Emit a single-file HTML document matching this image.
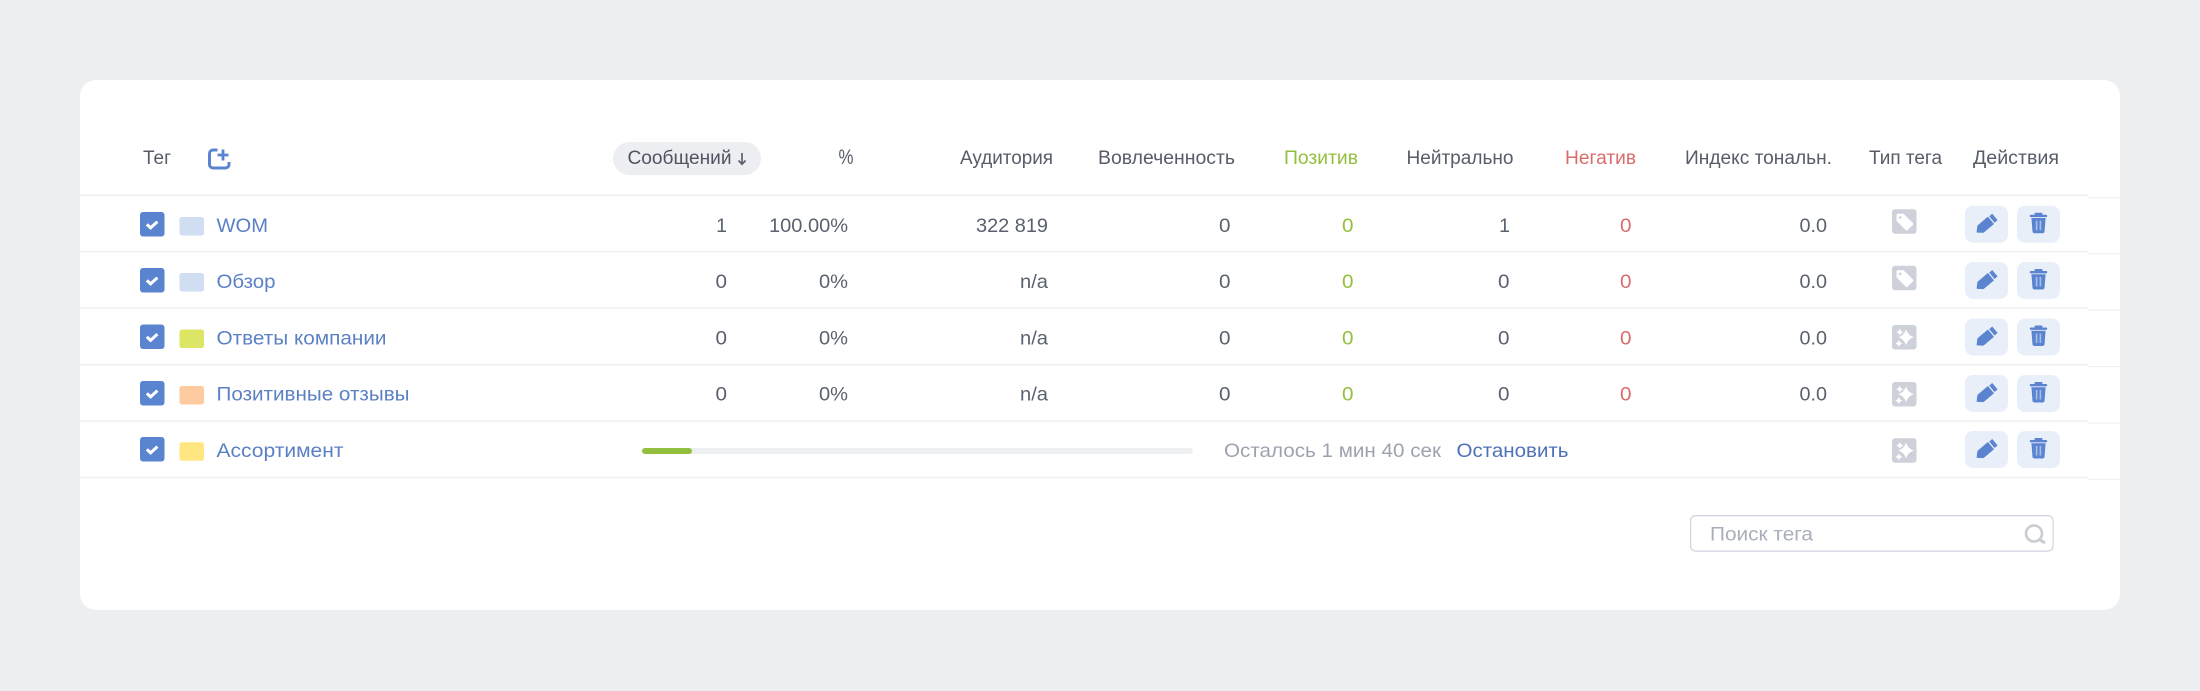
<!DOCTYPE html>
<html lang="ru">
<head>
<meta charset="utf-8">
<title>Теги</title>
<style>
html,body{margin:0;padding:0;width:2200px;height:691px;overflow:hidden;background:#edeef0}
svg{display:block}
text{font-family:"Liberation Sans","DejaVu Sans",sans-serif;font-size:19.5px;fill:#5a616e}
.h{font-size:19px;fill:#565c68}
.n{fill:#5b80c4}
.p{fill:#93bf3e}
.r{fill:#d96b6b}
</style>
</head>
<body>
<svg width="2200" height="691" viewBox="0 0 2200 691" xmlns="http://www.w3.org/2000/svg">
<defs>
  <g id="cb">
    <rect width="24.5" height="24.5" rx="3" fill="#5b84d0"/>
    <path d="M6.8 12.4 L10.6 15.8 L17.4 9.6" fill="none" stroke="#fff" stroke-width="3"/>
  </g>
  <g id="btns">
    <rect width="43" height="37" rx="8" fill="#e9eff9"/>
    <path d="M12.2 26.3 L13 20.2 L22.8 11.8 L28.2 18.2 L18.3 26.5 Z" fill="#5b84d0" stroke="#5b84d0" stroke-width="1.2" stroke-linejoin="round"/>
    <path d="M24.2 10.6 L27.2 8 L32.6 14.4 L29.6 17 Z" fill="#5b84d0"/>
    <g transform="translate(52 0)">
      <rect width="43" height="37" rx="8" fill="#e9eff9"/>
      <rect x="17.5" y="7" width="8" height="2.5" rx="1" fill="#5b84d0"/>
      <rect x="12.8" y="9" width="17.4" height="2.4" rx="1" fill="#5b84d0"/>
      <path d="M14.4 12.3 H28.6 L27.5 25.8 A2 2 0 0 1 25.7 27.5 H17.3 A2 2 0 0 1 15.5 25.8 Z" fill="#5b84d0"/>
      <rect x="18.8" y="15" width="1.6" height="9.5" fill="#a9bfe8"/>
      <rect x="22.6" y="15" width="1.6" height="9.5" fill="#a9bfe8"/>
    </g>
  </g>
  <g id="tag">
    <rect width="24.5" height="24.5" rx="3" fill="#cdd1d9"/>
    <path d="M5.5 4.5 H11.5 L21 13.8 A1.5 1.5 0 0 1 21 15.5 L15.5 21 A1.5 1.5 0 0 1 13.8 21 L4.5 11.5 V5.5 Z" fill="#fff"/>
    <circle cx="8.2" cy="8.2" r="1.3" fill="#cdd1d9"/>
  </g>
  <g id="spark">
    <rect width="24.5" height="24.5" rx="3" fill="#cdd1d9"/>
    <path d="M14 4.2 Q15.8 10.4 22 12.2 Q15.8 14 14 20.2 Q12.2 14 6.4 12.2 Q12.2 10.4 14 4.2 Z" fill="#fff"/>
    <path d="M7.8 3.4 Q8.5 6.5 11.6 7.2 Q8.5 7.9 7.8 10.8 Q7.1 7.9 4.2 7.2 Q7.1 6.5 7.8 3.4 Z" fill="#fff"/>
    <path d="M6.8 14.8 Q7.5 17.9 10.6 18.6 Q7.5 19.3 6.8 22.2 Q6.1 19.3 3.2 18.6 Q6.1 17.9 6.8 14.8 Z" fill="#fff"/>
  </g>
</defs>

<rect x="80" y="80" width="2040" height="530" rx="16" fill="#fff"/>

<!-- row lines -->
<g fill="#eef0f2">
  <rect x="80" y="194.5" width="2008" height="1.5"/>
  <rect x="80" y="251" width="2008" height="1.5"/>
  <rect x="80" y="307.3" width="2008" height="1.5"/>
  <rect x="80" y="364" width="2008" height="1.5"/>
  <rect x="80" y="420.3" width="2008" height="1.5"/>
  <rect x="80" y="476.7" width="2008" height="1.5"/>
  <rect x="2088" y="197" width="32" height="1.2"/>
  <rect x="2088" y="253" width="32" height="1.2"/>
  <rect x="2088" y="309.4" width="32" height="1.2"/>
  <rect x="2088" y="366" width="32" height="1.2"/>
  <rect x="2088" y="422.4" width="32" height="1.2"/>
  <rect x="2088" y="478.7" width="32" height="1.2"/>
</g>

<!-- header -->
<text class="h" x="143" y="164" textLength="28" lengthAdjust="spacingAndGlyphs">Тег</text>
<path d="M217.5 150 H213 A3.5 3.5 0 0 0 209.5 153.5 V164.5 A3.5 3.5 0 0 0 213 168 H225.5 A3.5 3.5 0 0 0 229 164.5 V162" fill="none" stroke="#5b84d0" stroke-width="3"/>
<path d="M223 149.5 V160.5 M217.5 155 H228.5" fill="none" stroke="#5b84d0" stroke-width="2.8"/>

<rect x="613" y="142" width="148" height="33" rx="16.5" fill="#eceef1"/>
<text class="h" x="627.5" y="164" textLength="104" lengthAdjust="spacingAndGlyphs" style="fill:#4e5460">Сообщений</text>
<path d="M742 153 V164 M738.5 160.5 L742 164.3 L745.5 160.5" fill="none" stroke="#5a616e" stroke-width="1.7"/>
<text class="h" x="838.5" y="164" textLength="15" lengthAdjust="spacingAndGlyphs" style="font-size:21px">%</text>
<text class="h" x="960" y="164" textLength="93" lengthAdjust="spacingAndGlyphs">Аудитория</text>
<text class="h" x="1098" y="164" textLength="137" lengthAdjust="spacingAndGlyphs">Вовлеченность</text>
<text class="h p" x="1284" y="164" textLength="74" lengthAdjust="spacingAndGlyphs">Позитив</text>
<text class="h" x="1406.5" y="164" textLength="107" lengthAdjust="spacingAndGlyphs">Нейтрально</text>
<text class="h r" x="1565" y="164" textLength="71" lengthAdjust="spacingAndGlyphs">Негатив</text>
<text class="h" x="1685" y="164" textLength="147" lengthAdjust="spacingAndGlyphs">Индекс тональн.</text>
<text class="h" x="1869" y="164" textLength="73" lengthAdjust="spacingAndGlyphs">Тип тега</text>
<text class="h" x="1973" y="164" textLength="86" lengthAdjust="spacingAndGlyphs">Действия</text>

<!-- checkboxes -->
<use href="#cb" x="140" y="212"/>
<use href="#cb" x="140" y="268"/>
<use href="#cb" x="140" y="324.5"/>
<use href="#cb" x="140" y="381"/>
<use href="#cb" x="140" y="437"/>

<!-- swatches -->
<rect x="179.5" y="217" width="24.5" height="18.5" rx="2.5" fill="#d0ddf3"/>
<rect x="179.5" y="273" width="24.5" height="18.5" rx="2.5" fill="#d0ddf3"/>
<rect x="179.5" y="329.5" width="24.5" height="18.5" rx="2.5" fill="#dde564"/>
<rect x="179.5" y="386" width="24.5" height="18.5" rx="2.5" fill="#fecba1"/>
<rect x="179.5" y="442.3" width="24.5" height="18.5" rx="2.5" fill="#ffe680"/>

<!-- names -->
<text class="n" x="216.5" y="232" textLength="51.5" lengthAdjust="spacingAndGlyphs">WOM</text>
<text class="n" x="216.5" y="288" textLength="59" lengthAdjust="spacingAndGlyphs">Обзор</text>
<text class="n" x="216.5" y="344.5" textLength="170" lengthAdjust="spacingAndGlyphs">Ответы компании</text>
<text class="n" x="216.5" y="400.7" textLength="193" lengthAdjust="spacingAndGlyphs">Позитивные отзывы</text>
<text class="n" x="216.5" y="457" textLength="127" lengthAdjust="spacingAndGlyphs">Ассортимент</text>

<!-- row 1 -->
<text x="727" y="232" text-anchor="end">1</text>
<text x="769" y="232" textLength="79" lengthAdjust="spacingAndGlyphs">100.00%</text>
<text x="976" y="232" textLength="72" lengthAdjust="spacingAndGlyphs">322 819</text>
<text x="1219" y="232" textLength="11.5" lengthAdjust="spacingAndGlyphs">0</text>
<text class="p" x="1342" y="232" textLength="11.5" lengthAdjust="spacingAndGlyphs">0</text>
<text x="1510" y="232" text-anchor="end">1</text>
<text class="r" x="1620" y="232" textLength="11.5" lengthAdjust="spacingAndGlyphs">0</text>
<text x="1799.5" y="232" textLength="27.5" lengthAdjust="spacingAndGlyphs">0.0</text>

<!-- row 2 -->
<text x="715.5" y="288" textLength="11.5" lengthAdjust="spacingAndGlyphs">0</text>
<text x="819" y="288" textLength="29" lengthAdjust="spacingAndGlyphs">0%</text>
<text x="1020" y="288" textLength="28" lengthAdjust="spacingAndGlyphs">n/a</text>
<text x="1219" y="288" textLength="11.5" lengthAdjust="spacingAndGlyphs">0</text>
<text class="p" x="1342" y="288" textLength="11.5" lengthAdjust="spacingAndGlyphs">0</text>
<text x="1498" y="288" textLength="11.5" lengthAdjust="spacingAndGlyphs">0</text>
<text class="r" x="1620" y="288" textLength="11.5" lengthAdjust="spacingAndGlyphs">0</text>
<text x="1799.5" y="288" textLength="27.5" lengthAdjust="spacingAndGlyphs">0.0</text>

<!-- row 3 -->
<text x="715.5" y="344.5" textLength="11.5" lengthAdjust="spacingAndGlyphs">0</text>
<text x="819" y="344.5" textLength="29" lengthAdjust="spacingAndGlyphs">0%</text>
<text x="1020" y="344.5" textLength="28" lengthAdjust="spacingAndGlyphs">n/a</text>
<text x="1219" y="344.5" textLength="11.5" lengthAdjust="spacingAndGlyphs">0</text>
<text class="p" x="1342" y="344.5" textLength="11.5" lengthAdjust="spacingAndGlyphs">0</text>
<text x="1498" y="344.5" textLength="11.5" lengthAdjust="spacingAndGlyphs">0</text>
<text class="r" x="1620" y="344.5" textLength="11.5" lengthAdjust="spacingAndGlyphs">0</text>
<text x="1799.5" y="344.5" textLength="27.5" lengthAdjust="spacingAndGlyphs">0.0</text>

<!-- row 4 -->
<text x="715.5" y="400.7" textLength="11.5" lengthAdjust="spacingAndGlyphs">0</text>
<text x="819" y="400.7" textLength="29" lengthAdjust="spacingAndGlyphs">0%</text>
<text x="1020" y="400.7" textLength="28" lengthAdjust="spacingAndGlyphs">n/a</text>
<text x="1219" y="400.7" textLength="11.5" lengthAdjust="spacingAndGlyphs">0</text>
<text class="p" x="1342" y="400.7" textLength="11.5" lengthAdjust="spacingAndGlyphs">0</text>
<text x="1498" y="400.7" textLength="11.5" lengthAdjust="spacingAndGlyphs">0</text>
<text class="r" x="1620" y="400.7" textLength="11.5" lengthAdjust="spacingAndGlyphs">0</text>
<text x="1799.5" y="400.7" textLength="27.5" lengthAdjust="spacingAndGlyphs">0.0</text>

<!-- row 5 progress -->
<rect x="642" y="448" width="551" height="6" rx="3" fill="#eeeff1"/>
<rect x="642" y="448" width="50" height="6" rx="3" fill="#93bf3e"/>
<text x="1224" y="457" textLength="217" lengthAdjust="spacingAndGlyphs" style="fill:#9da3ae">Осталось 1 мин 40 сек</text>
<text x="1456.5" y="457" textLength="112" lengthAdjust="spacingAndGlyphs" style="fill:#4d72b8">Остановить</text>

<!-- type icons -->
<use href="#tag" x="1892" y="209.3"/>
<use href="#tag" x="1892" y="265.7"/>
<use href="#spark" x="1892" y="325"/>
<use href="#spark" x="1892" y="382"/>
<use href="#spark" x="1892" y="438.3"/>

<!-- action buttons -->
<use href="#btns" x="1965" y="205.7"/>
<use href="#btns" x="1965" y="262"/>
<use href="#btns" x="1965" y="318.5"/>
<use href="#btns" x="1965" y="375"/>
<use href="#btns" x="1965" y="431"/>

<!-- search -->
<rect x="1690.6" y="515.6" width="362.5" height="35.5" rx="5" fill="#fff" stroke="#cfd4de" stroke-width="1.2"/>
<text x="1710" y="540.5" textLength="103" lengthAdjust="spacingAndGlyphs" style="fill:#a9afba">Поиск тега</text>
<circle cx="2034" cy="533.5" r="8" fill="none" stroke="#c8ccd3" stroke-width="2.6"/>
<path d="M2039.5 539.5 L2045 543" fill="none" stroke="#c8ccd3" stroke-width="3"/>
</svg>
</body>
</html>
